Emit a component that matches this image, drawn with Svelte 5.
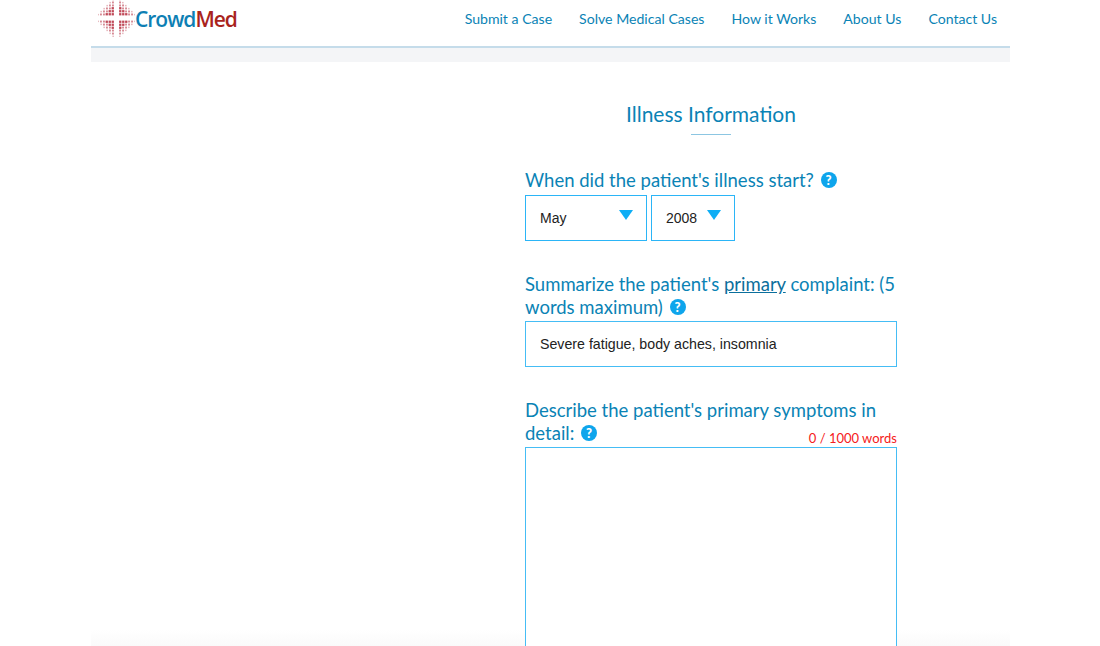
<script>
    const links = ['Submit a Case', 'Solve Medical Cases', 'How it Works', 'About Us', 'Contact Us'];

    // logo is four triangles of small red squares around a white cross
    const dots = [];
    for (const sx of [-1, 1]) {
        for (const sy of [-1, 1]) {
            for (let i = 0; i <= 5; i++) {
                for (let j = 0; j + i <= 5; j++) {
                    const d = i + j;
                    const size = d < 3 ? 2.3 : d < 5 ? 1.9 : 1.5;
                    const x = 2.6 + i * 3 + size / 2;
                    const y = 2.6 + j * 3 + size / 2;
                    dots.push({
                        x: 18.5 + sx * x - size / 2,
                        y: 18 + sy * y - size / 2,
                        size,
                        o: d < 3 ? 0.85 : d < 5 ? 0.55 : 0.35,
                    });
                }
            }
        }
    }
</script>

<div class="page">
    <header>
        <a class="logo" href="#top">
            <svg width="37" height="37" viewBox="0 0 37 37">
                {#each dots as dot}
                    <rect x={dot.x} y={dot.y} width={dot.size} height={dot.size} fill="#b5283a" opacity={dot.o} />
                {/each}
            </svg>
            <span class="crowd">Crowd</span><span class="med">Med</span>
        </a>
        <nav>
            {#each links as link}
                <a href="#top">{link}</a>
            {/each}
        </nav>
    </header>
    <div class="band"></div>

    <main>
        <div class="left"></div>
        <form>
            <h2>Illness Information</h2>
            <div class="rule"></div>

            <div class="field first">
                <label for="month">When did the patient's illness start? <span class="help">?</span></label>
                <div class="selects">
                    <div class="select month" id="month">May<i></i></div>
                    <div class="select year">2008<i></i></div>
                </div>
            </div>

            <div class="field">
                <label for="complaint">Summarize the patient's <u>primary</u> complaint: (5 words maximum) <span class="help">?</span></label>
                <input id="complaint" type="text" value="Severe fatigue, body aches, insomnia" />
            </div>

            <div class="field detail">
                <label for="detail">Describe the patient's primary symptoms in detail: <span class="help">?</span></label>
                <div class="count">0 / 1000 words</div>
                <textarea id="detail"></textarea>
            </div>
        </form>
    </main>
</div>

<style>
    :global(body) {
        margin: 0;
        background: #fff;
        overflow: hidden;
    }

    .page {
        width: 919px;
        height: 646px;
        margin-left: 91px;
        overflow: hidden;
        font-family: Lato, "Open Sans", sans-serif;
        color: #0a83b5;
        background: linear-gradient(to bottom, #fff 630px, #fafafa 646px);
    }

    header {
        display: flex;
        justify-content: space-between;
        align-items: flex-start;
        height: 46px;
        background: #fff;
        border-bottom: 2px solid #c5dcea;
    }

    .logo {
        display: flex;
        align-items: center;
        height: 37px;
        margin-left: 7px;
        text-decoration: none;
        font-family: "Open Sans", sans-serif;
        font-size: 21px;
        font-weight: 600;
        letter-spacing: -1px;
    }

    .crowd {
        color: #0e7fb4;
    }

    .med {
        color: #a9231c;
    }

    nav {
        display: flex;
        gap: 27px;
        margin-right: 13px;
        padding-top: 10px;
    }

    nav a {
        color: #0a83b5;
        text-decoration: none;
        font-size: 14.1px;
        line-height: 18px;
    }

    .band {
        height: 14px;
        background: #f4f5f7;
    }

    main {
        display: grid;
        grid-template-columns: 434px 372px;
    }

    form {
        display: flex;
        flex-direction: column;
    }

    h2 {
        margin: 38px 0 0;
        text-align: center;
        font-size: 21px;
        line-height: 28px;
        font-weight: 400;
    }

    .rule {
        width: 40px;
        height: 1px;
        margin: 6px auto 0;
        background: #8cc6e2;
    }

    .field {
        position: relative;
        margin-top: 32px;
    }

    .field.first {
        margin-top: 34px;
    }

    .field.first label {
        margin-bottom: 3px;
    }

    label {
        display: block;
        font-size: 18.5px;
        line-height: 23px;
        margin-bottom: 2px;
    }

    u {
        color: #0b6f9c;
    }

    .help {
        display: inline-block;
        width: 16px;
        height: 16px;
        margin-left: 2px;
        border-radius: 50%;
        background: #0ea5ec;
        color: #fff;
        font-size: 13px;
        font-weight: 900;
        line-height: 16px;
        text-align: center;
        vertical-align: 2px;
    }

    .selects {
        display: flex;
        gap: 4px;
    }

    .select {
        position: relative;
        box-sizing: border-box;
        height: 46px;
        padding-left: 14px;
        border: 1px solid #2bb5f7;
        color: #222;
        font-family: "Liberation Sans", sans-serif;
        font-size: 14px;
        line-height: 44px;
    }

    .month {
        width: 122px;
    }

    .year {
        width: 84px;
    }

    /* css triangle for the dropdown arrow */
    .select i {
        position: absolute;
        top: 14px;
        right: 13px;
        border-style: solid;
        border-width: 10px 7px 0;
        border-color: #0eaef5 transparent transparent;
    }

    input, textarea {
        display: block;
        box-sizing: border-box;
        width: 372px;
        margin: 0;
        border: 1px solid #45bdf5;
        border-radius: 0;
        background: #fff;
        outline: none;
        resize: none;
    }

    input {
        height: 46px;
        padding: 0 14px;
        color: #222;
        font-family: "Liberation Sans", sans-serif;
        font-size: 14.2px;
    }

    textarea {
        height: 300px;
    }

    .count {
        position: absolute;
        right: 0;
        top: 31px;
        color: #f52020;
        font-size: 13px;
        line-height: 17px;
    }
</style>
